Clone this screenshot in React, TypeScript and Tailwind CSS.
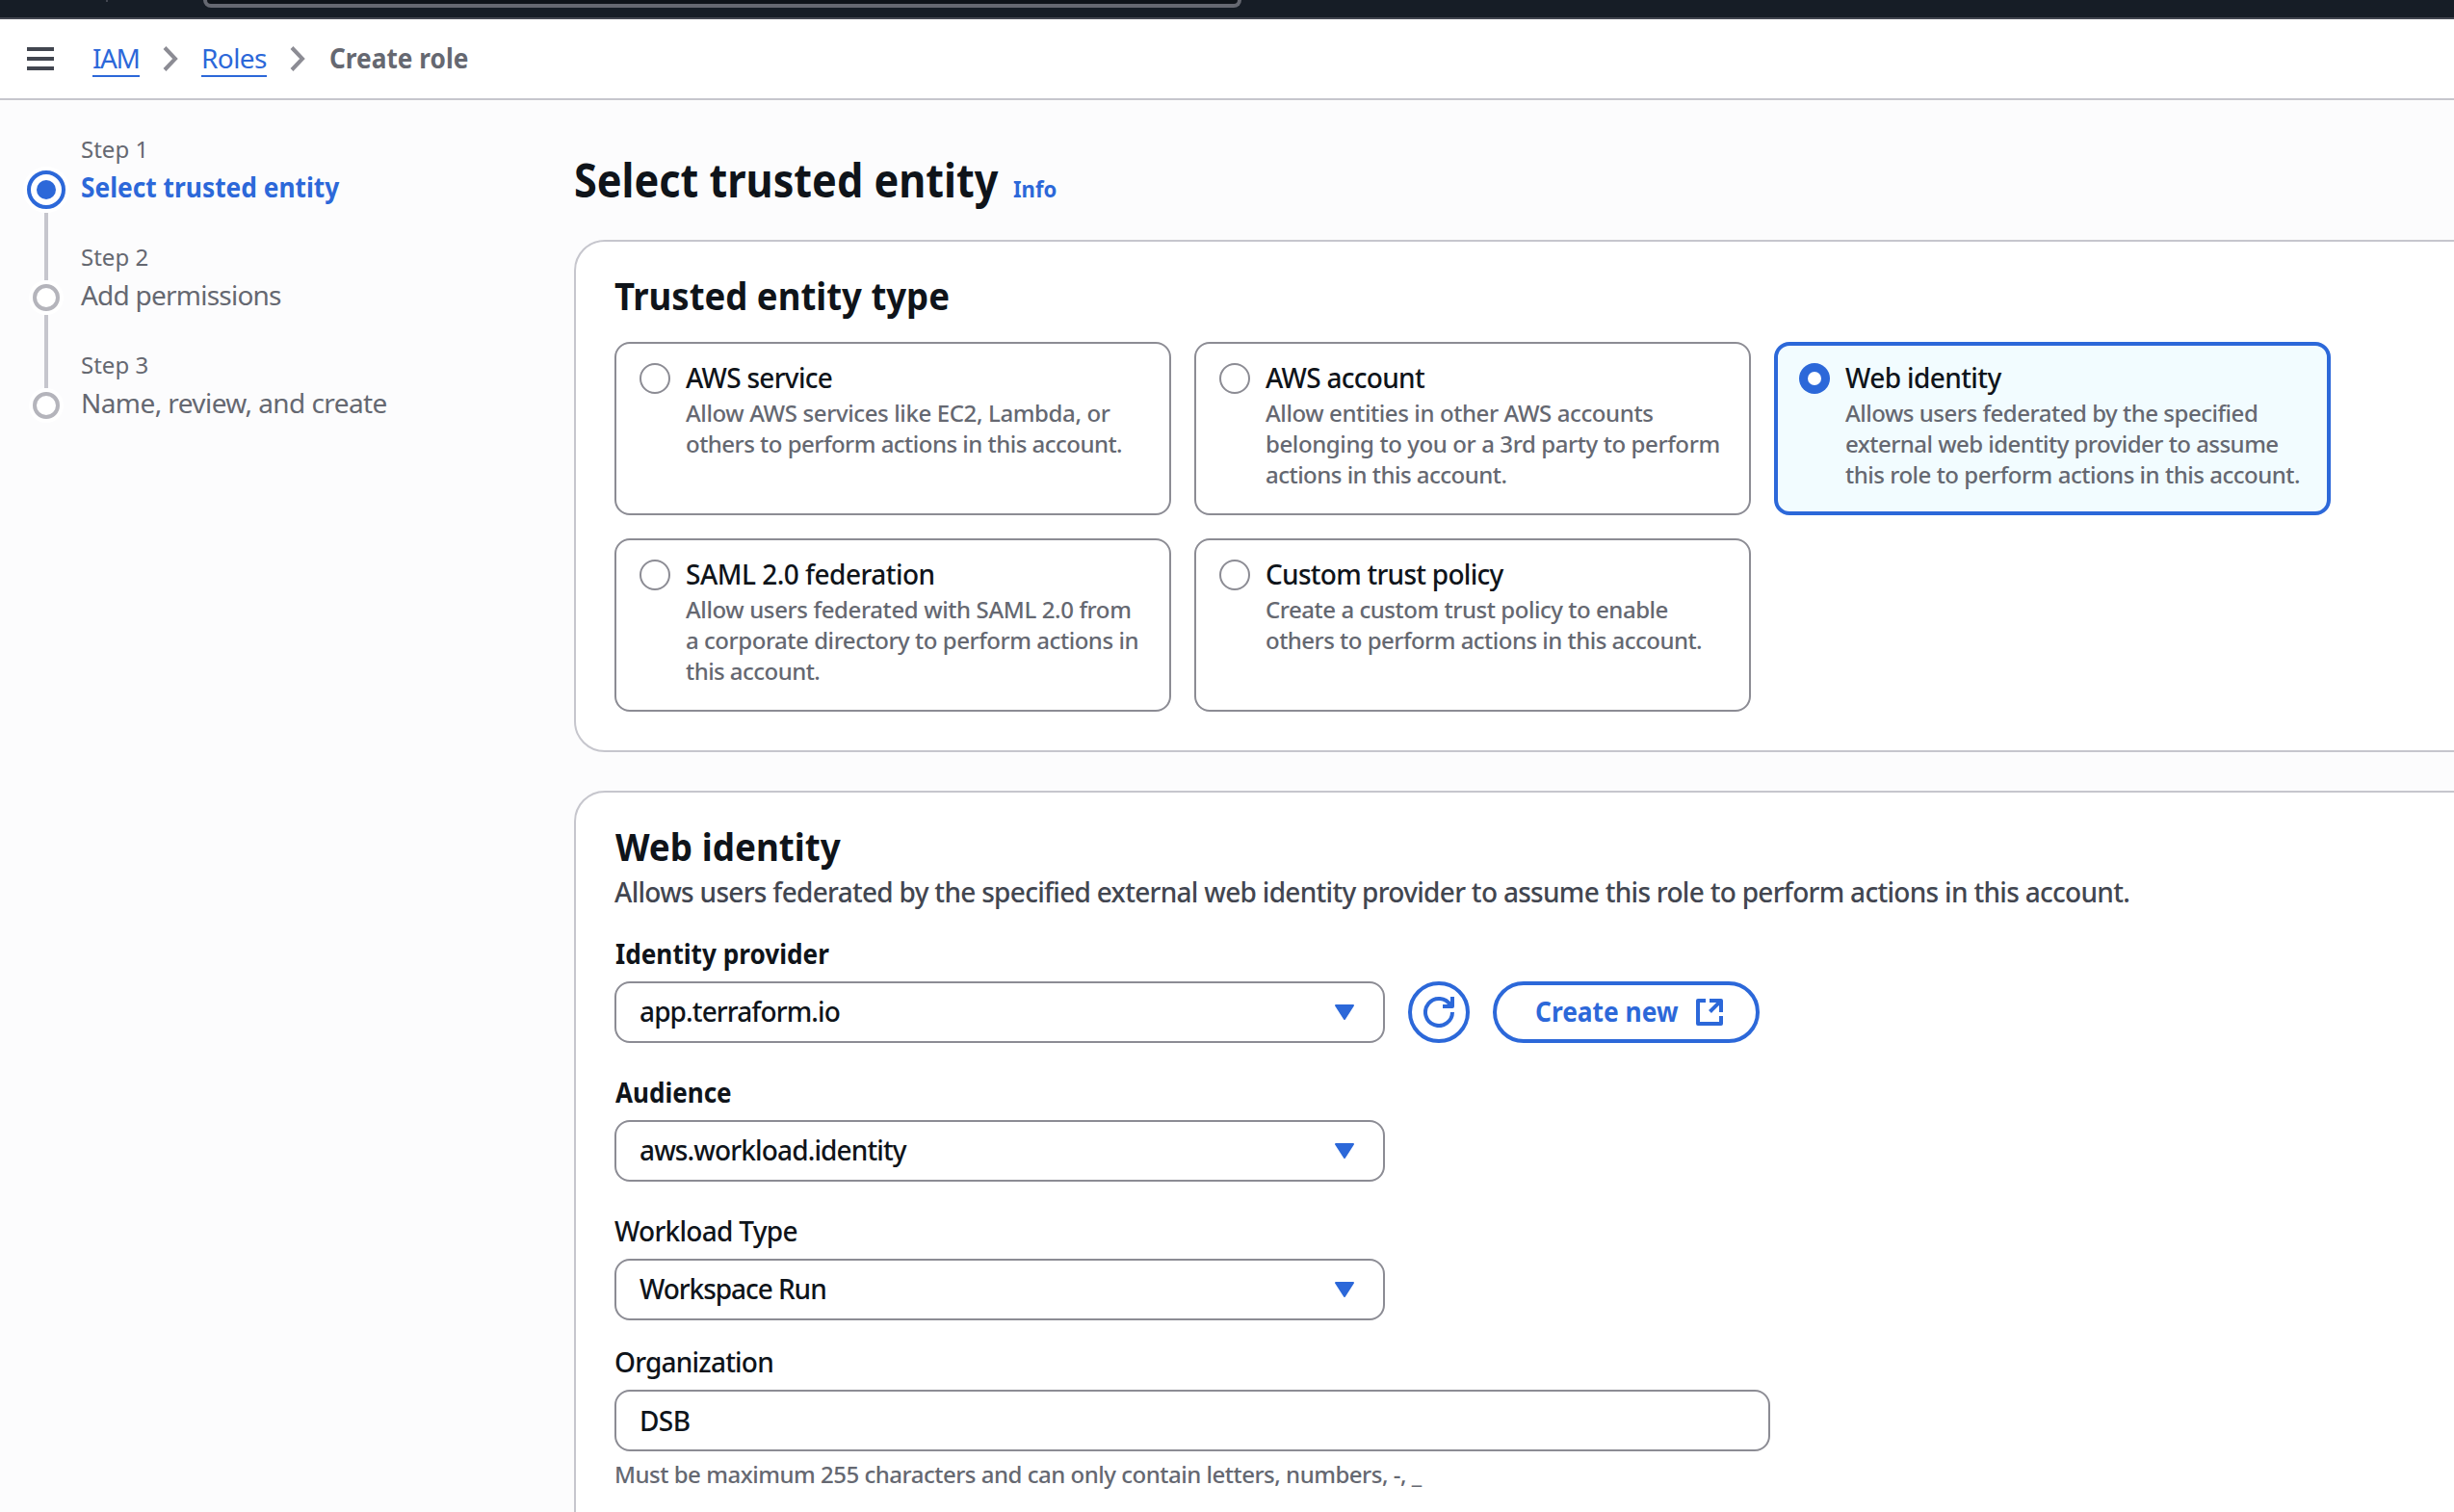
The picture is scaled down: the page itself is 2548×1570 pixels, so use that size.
import React from 'react';

type Entity = {
  title: string;
  titleTracking: string;
  lines: { text: string; tracking: string }[];
  selected?: boolean;
};

const entities: Entity[] = [
  {
    title: 'AWS service',
    titleTracking: 'tracking-[-0.7px]',
    lines: [
      { text: 'Allow AWS services like EC2, Lambda, or', tracking: 'tracking-[-0.38px]' },
      { text: 'others to perform actions in this account.', tracking: 'tracking-[-0.52px]' },
    ],
  },
  {
    title: 'AWS account',
    titleTracking: 'tracking-[-0.7px]',
    lines: [
      { text: 'Allow entities in other AWS accounts', tracking: 'tracking-[-0.4px]' },
      { text: 'belonging to you or a 3rd party to perform', tracking: 'tracking-[-0.4px]' },
      { text: 'actions in this account.', tracking: 'tracking-[-0.52px]' },
    ],
  },
  {
    title: 'Web identity',
    titleTracking: 'tracking-[-0.6px]',
    selected: true,
    lines: [
      { text: 'Allows users federated by the specified', tracking: 'tracking-[-0.48px]' },
      { text: 'external web identity provider to assume', tracking: 'tracking-[-0.53px]' },
      { text: 'this role to perform actions in this account.', tracking: 'tracking-[-0.48px]' },
    ],
  },
  {
    title: 'SAML 2.0 federation',
    titleTracking: 'tracking-[-0.51px]',
    lines: [
      { text: 'Allow users federated with SAML 2.0 from', tracking: 'tracking-[-0.38px]' },
      { text: 'a corporate directory to perform actions in', tracking: 'tracking-[-0.46px]' },
      { text: 'this account.', tracking: 'tracking-[-0.55px]' },
    ],
  },
  {
    title: 'Custom trust policy',
    titleTracking: 'tracking-[-0.73px]',
    lines: [
      { text: 'Create a custom trust policy to enable', tracking: 'tracking-[-0.46px]' },
      { text: 'others to perform actions in this account.', tracking: 'tracking-[-0.52px]' },
    ],
  },
];

function Chevron() {
  return (
    <svg className="h-[26px] w-4" viewBox="0 0 16 26" fill="none" stroke="#8c8c94" strokeWidth="4">
      <path d="M2 1.5 13 13 2 24.5" />
    </svg>
  );
}

function TopBar() {
  return (
    <div className="flex h-5 shrink-0 items-start border-b-2 border-[#424650] bg-[#161d26]">
      <div className="ml-[110px] h-0.5 w-0.5 bg-[#424650]" />
      <div className="ml-[99px] h-2 w-[1078px] rounded-b-[16px] border-4 border-t-0 border-[#656871] bg-[#0f141a]" />
    </div>
  );
}

function Breadcrumbs() {
  return (
    <nav className="flex h-[84px] shrink-0 items-start border-b-2 border-[#c6c6cd] bg-white pl-7 pt-5 text-[28px] leading-10">
      <div className="mt-[9px] flex w-7 flex-col gap-1.5">
        <div className="h-1 bg-[#424650]" />
        <div className="h-1 bg-[#424650]" />
        <div className="h-1 bg-[#424650]" />
      </div>
      <a className="ml-10 h-10 w-[49px] border-b-2 border-[#2c68d9] tracking-[-1.4px] text-[#2c68d9]">IAM</a>
      <div className="ml-[24px] mt-2">
        <Chevron />
      </div>
      <a className="ml-[24px] h-10 w-[68px] border-b-2 border-[#2c68d9] tracking-[-0.6px] text-[#2c68d9]">Roles</a>
      <div className="ml-[24px] mt-2">
        <Chevron />
      </div>
      <span className="ml-[25px] origin-left scale-x-[0.937] font-bold text-[#656871]">Create role</span>
    </nav>
  );
}

function Steps() {
  return (
    <aside className="flex w-[596px] shrink-0 pl-7 pt-[35px]">
      <div className="flex w-10 flex-col items-center pt-[38px]">
        <div className="flex size-10 items-center justify-center rounded-full border-4 border-[#2c68d9] bg-white ring-4 ring-white">
          <div className="size-5 rounded-full bg-[#2c68d9]" />
        </div>
        <div className="mt-1 h-[70px] w-1 bg-[#c6c6cd]" />
        <div className="mt-1 size-7 rounded-full border-4 border-[#b4b4bb] bg-white ring-4 ring-white" />
        <div className="mt-1 h-[76px] w-1 bg-[#c6c6cd]" />
        <div className="mt-1 size-7 rounded-full border-4 border-[#b4b4bb] bg-white ring-4 ring-white" />
      </div>
      <div className="ml-4 flex flex-col gap-[37px] whitespace-nowrap text-[28px] leading-10 text-[#656871]">
        <div>
          <div className="mb-[3px] text-2xl leading-8">Step 1</div>
          <div className="origin-left scale-x-94 font-bold text-[#2c68d9]">Select trusted entity</div>
        </div>
        <div>
          <div className="mb-[3px] text-2xl leading-8">Step 2</div>
          <div className="tracking-[-0.77px]">Add permissions</div>
        </div>
        <div>
          <div className="mb-[3px] text-2xl leading-8">Step 3</div>
          <div className="tracking-[-0.58px]">Name, review, and create</div>
        </div>
      </div>
    </aside>
  );
}

function EntityCard({ entity }: { entity: Entity }) {
  return (
    <div
      className={
        entity.selected
          ? 'flex h-[180px] rounded-[16px] border-4 border-[#2c68d9] bg-[#f2fcff] pl-[22px] pt-[13px]'
          : 'flex h-[180px] rounded-[16px] border-2 border-[#8c8c94] bg-white pl-6 pt-[15px]'
      }
    >
      {entity.selected ? (
        <div className="mt-[5px] flex size-8 shrink-0 items-center justify-center rounded-full bg-[#2c68d9]">
          <div className="size-3.5 rounded-full bg-white" />
        </div>
      ) : (
        <div className="mt-[5px] size-8 shrink-0 rounded-full border-2 border-[#8c8c94] bg-white" />
      )}
      <div className="ml-4 whitespace-nowrap font-medium">
        <div className={`text-[28px] leading-10 text-[#0f141a] ${entity.titleTracking}`}>{entity.title}</div>
        <div className="mt-[0.7px] text-2xl leading-8 text-[#656871]">
          {entity.lines.map((line) => (
            <div key={line.text} className={line.tracking}>
              {line.text}
            </div>
          ))}
        </div>
      </div>
    </div>
  );
}

function Select({ value, tracking }: { value: string; tracking: string }) {
  return (
    <div className="flex h-16 w-[800px] items-center justify-between rounded-[16px] border-2 border-[#8c8c94] bg-white pl-6 pr-[30px]">
      <span className={`-mt-0.5 font-medium ${tracking}`}>{value}</span>
      <svg className="h-4 w-5" viewBox="0 0 20 16" fill="#2c68d9" stroke="#2c68d9" strokeWidth="2" strokeLinejoin="round">
        <path d="M1 1h18l-9 14z" />
      </svg>
    </div>
  );
}

function RefreshIcon() {
  return (
    <svg className="size-8" viewBox="0 0 32 32" fill="none" stroke="#2c68d9" strokeWidth="4" strokeLinejoin="round">
      <path d="M30 16A14 14 0 1 1 28.1 9" />
      <path d="M20 10h10V0" />
    </svg>
  );
}

function ExternalIcon() {
  return (
    <svg className="size-7" viewBox="0 0 28 28" fill="none" stroke="#2c68d9" strokeWidth="4" strokeLinejoin="round">
      <path d="M10 2H2v24h24v-8" />
      <path d="M14 2h12v12" />
      <path d="M26 2 14.5 13.5" />
    </svg>
  );
}

export default function App() {
  return (
    <div className="flex h-[1570px] w-[2548px] flex-col overflow-hidden bg-[#fcfcfd] font-['Noto_Sans',sans-serif] text-[#0f141a]">
      <TopBar />
      <Breadcrumbs />
      <div className="flex">
        <Steps />
        <main className="w-[2000px] shrink-0 pt-[52px]">
          <header className="flex items-baseline whitespace-nowrap">
            <h1 className="w-[456px] origin-left scale-x-90 text-[48px] font-bold leading-[61px]">Select trusted entity</h1>
            <a className="origin-left scale-x-92 text-2xl font-bold text-[#2c68d9]">Info</a>
          </header>

          <section className="mt-8 h-[532px] rounded-[32px] border-2 border-[#c6c6cd] bg-white pl-10 pt-[31px]">
            <h2 className="origin-left scale-x-[0.913] text-[40px] font-bold leading-[49px]">Trusted entity type</h2>
            <div className="mt-6 grid w-[1782px] grid-cols-3 gap-6">
              {entities.map((entity) => (
                <EntityCard key={entity.title} entity={entity} />
              ))}
            </div>
          </section>

          <section className="mt-10 h-[900px] rounded-[32px] border-2 border-[#c6c6cd] bg-white pl-10 pt-[31px] text-[28px] leading-10">
            <h2 className="ml-px origin-left scale-x-[0.92] text-[40px] font-bold leading-[49px]">Web identity</h2>
            <p className="mt-[3px] font-medium tracking-[-0.7px] text-[#424650]">
              Allows users federated by the specified external web identity provider to assume this role to perform actions in this account.
            </p>

            <div className="mt-6">
              <div className="ml-px origin-left scale-x-[0.935] font-bold">Identity provider</div>
              <div className="mt-[9px] flex items-center gap-6">
                <Select value="app.terraform.io" tracking="tracking-[-0.88px]" />
                <button className="flex size-16 items-center justify-center rounded-full border-4 border-[#2c68d9] bg-white">
                  <RefreshIcon />
                </button>
                <button className="flex h-16 w-[277px] items-center rounded-full border-4 border-[#2c68d9] bg-white pl-10 text-[#2c68d9]">
                  <span className="-mt-0.5 w-[167px] origin-left scale-x-[0.94] whitespace-nowrap text-left font-bold">Create new</span>
                  <ExternalIcon />
                </button>
              </div>
            </div>

            <div className="mt-[31px]">
              <div className="ml-px origin-left scale-x-[0.93] font-bold">Audience</div>
              <div className="mt-[9px]">
                <Select value="aws.workload.identity" tracking="tracking-[-0.87px]" />
              </div>
            </div>

            <div className="mt-[31px]">
              <div className="font-medium tracking-[-0.72px]">Workload Type</div>
              <div className="mt-[9px]">
                <Select value="Workspace Run" tracking="tracking-[-1.05px]" />
              </div>
            </div>

            <div className="mt-[23px]">
              <div className="font-medium tracking-[-0.78px]">Organization</div>
              <div className="mt-[9px] flex h-16 w-[1200px] items-center rounded-[16px] border-2 border-[#8c8c94] bg-white pl-6 font-medium tracking-[-0.6px]">
                DSB
              </div>
              <div className="mt-[7.7px] text-2xl font-medium leading-8 tracking-[-0.49px] text-[#656871]">
                Must be maximum 255 characters and can only contain letters, numbers, -, _
              </div>
            </div>
          </section>
        </main>
      </div>
    </div>
  );
}
